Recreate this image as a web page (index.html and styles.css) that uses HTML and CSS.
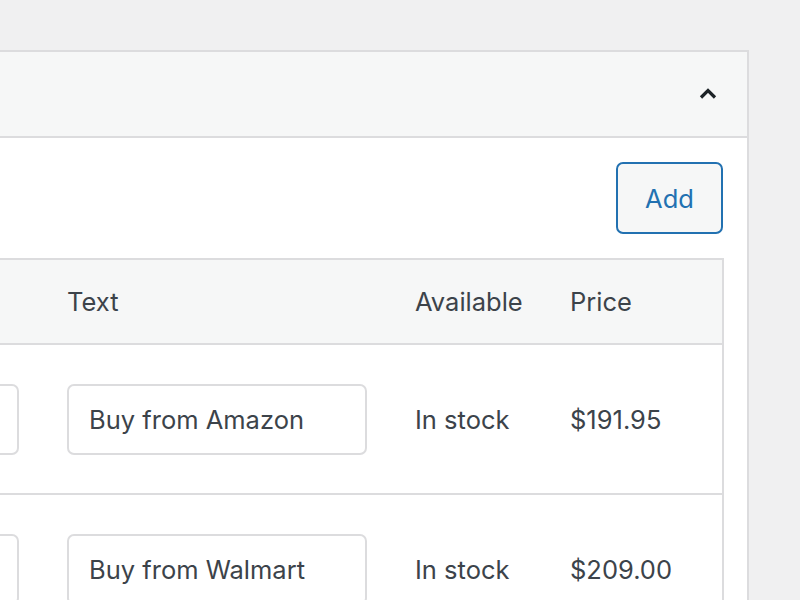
FILE: index.html
```html
<!DOCTYPE html>
<html>
<head>
<meta charset="utf-8">
<link rel="stylesheet" href="styles.css">
</head>
<body>
<div class="panel">
  <div class="panel-header">
    <button class="toggle" aria-label="Collapse">
      <svg width="18" height="11" viewBox="0 0 18 11"><path d="M2 9.5 L9 2.5 L16 9.5" fill="none" stroke="#1d2327" stroke-width="3.2" stroke-linecap="butt" stroke-linejoin="miter"/></svg>
    </button>
  </div>
  <div class="panel-body">
    <div class="toolbar">
      <button class="btn-add">Add</button>
    </div>
    <div class="table">
      <div class="row head">
        <div class="cell"></div>
        <div class="cell">Text</div>
        <div class="cell">Available</div>
        <div class="cell">Price</div>
      </div>
      <div class="row">
        <div class="cell"><input class="field" type="text" value=""></div>
        <div class="cell"><input class="field" type="text" value="Buy from Amazon"></div>
        <div class="cell">In stock</div>
        <div class="cell">$191.95</div>
      </div>
      <div class="row">
        <div class="cell"><input class="field" type="text" value=""></div>
        <div class="cell"><input class="field" type="text" value="Buy from Walmart"></div>
        <div class="cell">In stock</div>
        <div class="cell">$209.00</div>
      </div>
    </div>
  </div>
</div>
</body>
</html>
```

FILE: styles.css
```css
html, body {
  margin: 0;
  padding: 0;
  background: #f0f0f1;
  overflow: hidden;
  height: 600px;
}
body {
  font-family: Inter, "Noto Sans", "Liberation Sans", sans-serif;
  color: #3c434a;
}
.panel {
  margin: 50px 51px 0 -220px;
  border: 2px solid #dcdcde;
  background: #fff;
}
.panel-header {
  height: 84px;
  background: #f6f7f7;
  border-bottom: 2px solid #dcdcde;
  display: flex;
  align-items: center;
  justify-content: flex-end;
  padding-right: 30px;
}
.toggle {
  border: 0;
  background: transparent;
  padding: 0;
  width: 18px;
  height: 11px;
  display: flex;
  margin-top: -1px;
}
.panel-body {
  padding: 24px 23px 0 24px;
}
.toolbar {
  display: flex;
  justify-content: flex-end;
  margin-right: 1px;
}
.btn-add {
  width: 107px;
  height: 72px;
  border: 2px solid #2271b1;
  border-radius: 7px;
  background: #f6f7f7;
  color: #2271b1;
  font-family: inherit;
  font-size: 25.5px;
  padding: 0;
}
.table {
  margin-top: 24px;
  border: 2px solid #dcdcde;
  border-bottom: 0;
}
.row {
  display: grid;
  grid-template-columns: 1fr 348px 155px 176px;
  height: 148px;
  align-items: center;
  border-bottom: 2px solid #dcdcde;
  font-size: 25.5px;
}
.row.head {
  height: 83px;
  background: #f6f7f7;
}
.cell {
  padding: 0 24px;
  white-space: nowrap;
}
.field {
  box-sizing: border-box;
  width: 300px;
  height: 71px;
  border: 2px solid #dcdcde;
  border-radius: 7px;
  padding: 0 20px;
  font-family: inherit;
  font-size: 25.5px;
  color: #3c434a;
  background: #fff;
  display: block;
}
.row .cell:first-child .field {
  width: 100%;
}
```
